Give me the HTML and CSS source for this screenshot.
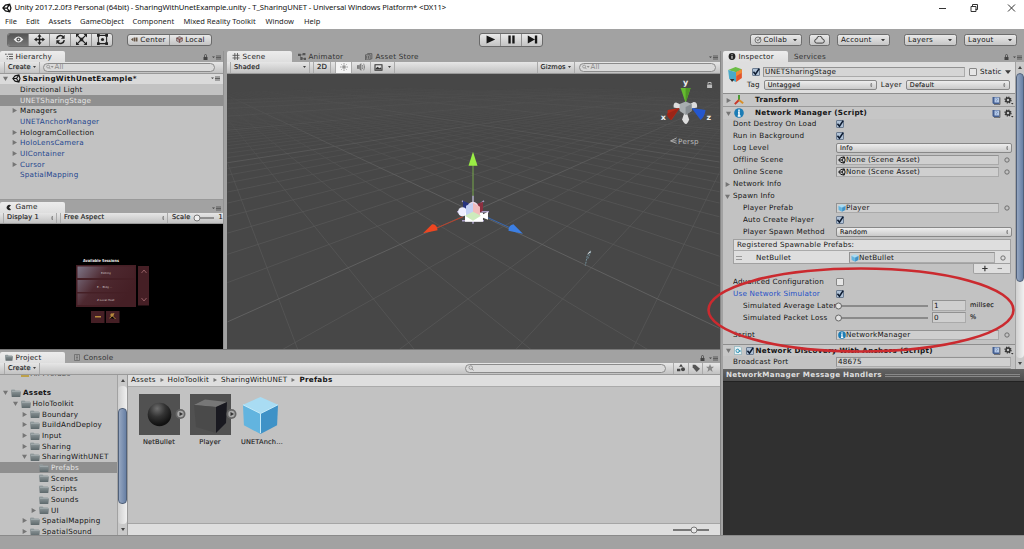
FILE: index.html
```html
<!DOCTYPE html>
<html lang="en">
<head>
<meta charset="utf-8">
<title>Unity 2017.2.0f3 Personal (64bit)</title>
<link rel="stylesheet" href="styles.css">
</head>
<body>
<svg class="defs" width="0" height="0">
  <defs>
    <linearGradient id="gFolder" x1="0" y1="0" x2="0" y2="1"><stop offset="0" stop-color="#98a1a3"/><stop offset="1" stop-color="#5d686b"/></linearGradient>
    <radialGradient id="gBall" cx=".4" cy=".25" r=".7"><stop offset="0" stop-color="#6e6e6e"/><stop offset=".5" stop-color="#333"/><stop offset="1" stop-color="#111"/></radialGradient>
    <linearGradient id="gGlow" x1="0" y1="0" x2="1" y2=".5"><stop offset="0" stop-color="#7d7587"/><stop offset=".45" stop-color="#4e2930"/><stop offset="1" stop-color="#451f25"/></linearGradient>
    <symbol id="unity" viewBox="0 0 16 16"><path d="M1.5 8 5.5 3.3 12.3 1.8 14.3 8l-2 6.2L5.5 12.7zM1.5 8H8l4.3-6.2M8 8l4.3 6.2" fill="none" stroke="currentColor" stroke-width="2"/></symbol>
    <symbol id="right" viewBox="0 0 8 8"><path d="M1 0 8 4 1 8z" fill="#757575"/></symbol>
    <symbol id="down" viewBox="0 0 8 8"><path d="M0 1h8L4 8z" fill="#757575"/></symbol>
    <symbol id="folder" viewBox="0 0 20 16"><path d="M0 3q0-2 2-2h5l2 2h8q1.5 0 1.5 2H20l-1.500 11H1.500z" fill="url(#gFolder)"/><path d="M2 5h16" stroke="#b4bcbe"/></symbol>
    <symbol id="lock" viewBox="0 0 10 12"><path d="M1 6h8v6H1z" fill="currentColor"/><path d="M3 6V3q0-2 2-2t2 2v3" fill="none" stroke="currentColor" stroke-width="1.500"/></symbol>
    <symbol id="menu" viewBox="0 0 18 10"><path d="M0 3h6L3 6z" fill="#444"/><path d="M8 2h10M8 5h10M8 8h10" stroke="#555" stroke-width="1.800"/></symbol>
    <symbol id="search" viewBox="0 0 16 12"><circle cx="5" cy="5" r="3.500" fill="none" stroke="#777" stroke-width="1.300"/><path d="m7.500 7.500 3 3.500" stroke="#777" stroke-width="1.500"/></symbol>
    <symbol id="searchDrop" viewBox="0 0 20 12"><circle cx="5" cy="5" r="3.500" fill="none" stroke="#777" stroke-width="1.300"/><path d="m7.500 7.500 3 3.500" stroke="#777" stroke-width="1.500"/><path d="M11 4h7l-3.500 4z" fill="#777"/></symbol>
    <symbol id="info" viewBox="0 0 16 16"><circle cx="8" cy="8" r="7.700" fill="#1b7cb5"/><path d="M8 2.500v3M6.500 7H8v5.500M6 12.700h4.500" stroke="#fff" stroke-width="2.400" fill="none"/></symbol>
    <symbol id="cube" viewBox="0 0 40 40"><path d="M20 1 38 9 20 18 2 9z" fill="#a9dcf3"/><path d="M2 9 20 18V39L3 30z" fill="#62b4df"/><path d="M38 9 20 18V39l17-9z" fill="#3f92c7"/><path d="M2 9 20 18 38 9M20 18v20" stroke="#c6ebfa" fill="none"/></symbol>
    <symbol id="book" viewBox="0 0 18 18"><path d="M1 2h14v14H3l-2-2z" fill="#445f91"/><path d="M5 3h9v10H5z" fill="#b6cbe8"/><path d="M7 6q3-2 4 0t-2 3v2" fill="none" stroke="#6f8ab8" stroke-width="1.300"/><path d="M16 3v14H4" fill="none" stroke="#222"/></symbol>
    <symbol id="gear" viewBox="0 0 20 18"><circle cx="8" cy="8" r="4" fill="none" stroke="#333" stroke-width="3"/><circle cx="8" cy="8" r="6" fill="none" stroke="#333" stroke-width="2.500" stroke-dasharray="2.400 2.300"/><path d="M14 14h5l-2.500 3z" fill="#333"/></symbol>
    <symbol id="target" viewBox="0 0 10 10"><circle cx="5" cy="5" r="3.600" fill="none" stroke="#666" stroke-width="1.500"/></symbol>
    <symbol id="check" viewBox="0 0 10 10"><path d="m1.800 4.800 2.500 3L9 .8" fill="none" stroke="#0d1b30" stroke-width="2"/></symbol>
    <symbol id="updown" viewBox="0 0 6 10"><path d="M3 0 6 4H0zM0 6h6l-3 4z" fill="#555"/></symbol>
    <symbol id="caret" viewBox="0 0 8 5"><path d="M0 0h8L4 5z" fill="#3d3d3d"/></symbol>
    <symbol id="hash" viewBox="0 0 12 12"><path d="M4 0v12M8.500 0v12M0 4h12M0 8.500h12" stroke="#555" stroke-width="1.500"/></symbol>
  </defs>
</svg>

<header class="titlebar">
  <svg class="logo"><use href="#unity"/></svg>
  <span class="title">Unity 2017.2.0f3 Personal (64bit) - SharingWithUnetExample.unity - T_SharingUNET - Universal Windows Platform* &lt;DX11&gt;</span>
  <svg class="winctl" viewBox="0 0 80 10"><g fill="none" stroke="#333" stroke-width="1"><path d="M2 5.500h7M34 3.500h5v5h-5zM35.500 3.500v-2h5v5h-2M71 1.500l7 7M78 1.500l-7 7"/></g></svg>
</header>
<nav class="menubar"><span class="m1">File</span><span class="m2">Edit</span><span class="m3">Assets</span><span class="m4">GameObject</span><span class="m5">Component</span><span class="m6">Mixed Reality Toolkit</span><span class="m7">Window</span><span>Help</span></nav>

<div class="maintools">
  <div class="btngroup tools">
    <span class="btn on"><svg viewBox="0 0 16 12"><path d="M1 6q7-9 14 0-7 9-14 0z" fill="#eee"/><circle cx="8" cy="6" r="3" fill="#555"/><circle cx="8" cy="6" r="1.200" fill="#eee"/></svg></span>
    <span class="btn"><svg viewBox="0 0 16 16"><path d="M8 2v12M2 8h12" stroke="#222" stroke-width="2"/><path d="M8 0l3 4H5zM8 16l3-4H5zM0 8l4-3v6zM16 8l-4-3v6z" fill="#222"/></svg></span>
    <span class="btn"><svg viewBox="0 0 16 16"><path d="M2.500 7a5.500 5.500 0 0 1 9.500-3M13.500 9A5.500 5.500 0 0 1 4 12" fill="none" stroke="#222" stroke-width="2.200"/><path d="M14 1v6H8.500zM2 15V9h5.500z" fill="#222"/></svg></span>
    <span class="btn"><svg viewBox="0 0 16 16"><path d="m2 2 12 12M14 2 2 14" stroke="#222" stroke-width="1.800"/><path d="M0 0h5L0 5zM16 0v5l-5-5zM0 16v-5l5 5zM16 16h-5l5-5zM5.500 5.500h5v5h-5z" fill="#222"/></svg></span>
    <span class="btn"><svg viewBox="0 0 16 16"><path d="M2 2h12v12H2z" fill="none" stroke="#222" stroke-width="1.500"/><path d="M0 0h4v4H0zM12 0h4v4h-4zM0 12h4v4H0zM12 12h4v4h-4z" fill="#222"/><circle cx="8" cy="8" r="2.300" fill="#222"/></svg></span>
  </div>
  <div class="btngroup pivot">
    <span class="btn"><svg viewBox="0 0 14 12"><path d="M0 6l5-4v8zM6 2h3v8H6zM10 2h3v8h-3z" fill="#654"/></svg>Center</span>
    <span class="btn"><svg viewBox="0 0 14 14"><path d="M7 1l6 3v6l-6 3-6-3V4z" fill="#a99" stroke="#544"/><path d="M1 4l6 3 6-3M7 7v6" stroke="#733" fill="none" stroke-width="1.500"/></svg>Local</span>
  </div>
  <div class="btngroup play">
    <span class="btn"><svg viewBox="0 0 14 12"><path d="M2 1l11 5-11 5z" fill="#151515"/></svg></span>
    <span class="btn"><svg viewBox="0 0 14 12"><path d="M3 1h3v10H3zM8 1h3v10H8z" fill="#151515"/></svg></span>
    <span class="btn"><svg viewBox="0 0 14 12"><path d="M1 1l9 5-9 5zM10 1h3v10h-3z" fill="#151515"/></svg></span>
  </div>
  <div class="right">
    <span class="drop collab"><svg class="i8" viewBox="0 0 12 12"><circle cx="6" cy="6" r="4.500" fill="none" stroke="#777" stroke-width="1.500"/><path d="m4 5 2 2 4-5" fill="none" stroke="#666" stroke-width="1.500"/></svg>Collab<svg class="caret"><use href="#caret"/></svg></span>
    <span class="drop cloud"><svg viewBox="0 0 16 11"><path d="M4 10a3 3 0 0 1 0-6 4 4 0 0 1 8 0 3 3 0 0 1 0 6z" fill="none" stroke="#333" stroke-width="1.300"/></svg></span>
    <span class="drop account">Account<svg class="caret"><use href="#caret"/></svg></span>
    <span class="drop layers">Layers<svg class="caret"><use href="#caret"/></svg></span>
    <span class="drop layout">Layout<svg class="caret"><use href="#caret"/></svg></span>
  </div>
</div>

<main class="work">
  <div class="leftside">
    <div class="toprow">
      <div class="leftcol">
        <section class="hierarchy">
          <div class="tabs"><span class="tab on"><svg class="ti" viewBox="0 0 14 12"><path d="M0 2h3M5 2h9M3 6h2M7 6h7M3 10h2M7 10h7" stroke="#444" stroke-width="1.500"/></svg>Hierarchy</span><span class="tabend"><svg class="lk"><use href="#lock"/></svg><svg class="mn"><use href="#menu"/></svg></span></div>
          <div class="bar"><span class="cell create">Create<svg class="caret s"><use href="#caret"/></svg></span><span class="search hs"><svg class="sd"><use href="#searchDrop"/></svg>All</span></div>
          <div class="tree">
            <div class="row scenehead"><svg class="ar"><use href="#down"/></svg><svg class="u"><use href="#unity"/></svg><b>SharingWithUnetExample*</b><svg class="mn"><use href="#menu"/></svg></div>
            <div class="row"><i></i>Directional Light</div>
            <div class="row sel"><i></i>UNETSharingStage</div>
            <div class="row"><i><svg class="ar"><use href="#right"/></svg></i>Managers</div>
            <div class="row pf"><i></i>UNETAnchorManager</div>
            <div class="row"><i><svg class="ar"><use href="#right"/></svg></i>HologramCollection</div>
            <div class="row pf"><i><svg class="ar"><use href="#right"/></svg></i>HoloLensCamera</div>
            <div class="row pf"><i><svg class="ar"><use href="#right"/></svg></i>UIContainer</div>
            <div class="row pf"><i><svg class="ar"><use href="#right"/></svg></i>Cursor</div>
            <div class="row pf"><i></i>SpatialMapping</div>
          </div>
        </section>
        <section class="game">
          <div class="tabs"><span class="tab on"><svg class="pac" viewBox="0 0 12 12"><path d="M10 1.500A5.500 5.500 0 1 0 10 10.500L6 6z" fill="#222"/></svg>Game</span><span class="tabend"><svg class="mn"><use href="#menu"/></svg></span></div>
          <div class="bar"><span class="cell disp">Display 1<svg class="ud"><use href="#updown"/></svg></span><span class="cell aspect">Free Aspect<svg class="ud"><use href="#updown"/></svg></span><span class="scale">Scale<svg viewBox="0 0 22 8"><path d="M6 4h15" stroke="#777" stroke-width="1.500"/><circle cx="4" cy="4" r="3" fill="#eee" stroke="#777"/></svg>1</span></div>
          <svg class="gameview" viewBox="0 223 223 125">
            <text x="83" y="261" class="gt" textLength="36" lengthAdjust="spacingAndGlyphs">Available Sessions</text>
            <path d="M76 264h60v42H76zM138 265h11v39.500h-11z" fill="#451f25"/>
            <path d="M77.500 265.500h57v11.500h-57zM77.500 279h57v12h-57zM77.500 292.500h57V304h-57z" fill="url(#gGlow)"/>
            <text x="101" y="272.500" class="gs">Editing</text><text x="97" y="286.500" class="gs">E…  Bldg  …</text><text x="97" y="300" class="gs">Z.Local Host</text>
            <path d="m141.500 272 2.500-3 2.500 3M141.500 297l2.500 3 2.500-3" fill="none" stroke="#a66d72" stroke-width=".8"/>
            <path d="M91 310h13.500v12H91zM106 310h13.500v12H106z" fill="#451f25"/>
            <path d="M95 315h6v1.500h-6z" fill="#b78a3c"/><circle cx="112" cy="314" r="1.700" fill="#b78a3c"/><path d="m109.500 317 3-2 3 3M114 312l-1 2" stroke="#b78a3c"/>
          </svg>
        </section>
      </div>
      <section class="scene">
        <div class="tabs"><span class="tab on"><svg class="ti"><use href="#hash"/></svg>Scene</span><span class="tab anim"><svg class="ti" viewBox="0 0 14 12"><path d="M3 3h6M3 3l3 6 5 1" fill="none" stroke="#555"/><path d="M0 1h5v4H0zM8 0h5v4H8zM4 7h4v5H4zM10 8h4v4h-4z" fill="#555"/></svg>Animator</span><span class="tab store"><svg class="ti" viewBox="0 0 14 12"><path d="M4 1h8v9h-2M1 3h8v9H1zM3 5v5M6 5v5" fill="none" stroke="#555" stroke-width="1.500"/></svg>Asset Store</span><span class="tabend"><svg class="mn"><use href="#menu"/></svg></span></div>
        <div class="bar">
          <span class="cell shaded">Shaded<svg class="caret s"><use href="#caret"/></svg></span><span class="cell two">2D</span>
          <span class="cell lit"><svg viewBox="0 0 12 12"><circle cx="6" cy="6" r="2" fill="#aaa" stroke="#777"/><path d="M6 0v2.500M6 9.500V12M0 6h2.500M9.500 6H12M2 2l1.500 1.500M10 2 8.500 3.500M2 10l1.500-1.500M10 10 8.500 8.500" stroke="#777"/></svg></span>
          <span class="cell snd"><svg viewBox="0 0 12 12"><path d="M0 4h3l3-3v10L3 8H0z" fill="#888" stroke="#666"/><path d="M8 3q2 3 0 6M10 1q3 5 0 10" fill="none" stroke="#666"/></svg></span>
          <span class="cell pic"><svg viewBox="0 0 12 10"><path d="M1 1h10v8H1z" fill="#ddd" stroke="#333" stroke-width="1.500"/><path d="M2 8V6l3-2 2 2 2-1 1 1v2z" fill="#333"/></svg><svg class="caret s"><use href="#caret"/></svg></span>
          <span class="cell giz">Gizmos<svg class="caret s"><use href="#caret"/></svg></span><span class="search ss"><svg class="sd"><use href="#searchDrop"/></svg>All</span>
        </div>
        <svg class="sceneview" viewBox="227 73 493 276">
          <defs><linearGradient id="fade" x1="0" y1="82" x2="0" y2="220" gradientUnits="userSpaceOnUse"><stop offset="0" stop-color="#fff" stop-opacity="0"/><stop offset=".2" stop-color="#fff" stop-opacity=".3"/><stop offset=".7" stop-color="#fff" stop-opacity=".85"/><stop offset="1" stop-color="#fff"/></linearGradient><mask id="far" maskUnits="userSpaceOnUse" x="227" y="73" width="493" height="276"><path d="M227 73h493v276H227z" fill="url(#fade)"/></mask></defs>
          <path id="grid" class="grid" mask="url(#far)"/>
          <path id="axes" class="grid major" mask="url(#far)"/>
          <path d="M473 210v-46" stroke="#76a84a"/><path d="M473 151l4.500 14h-9z" fill="#9aed45"/>
          <path d="m463 216-28 12" stroke="#bb4029"/><path d="m423 232.500 9-9q5 0 5.500 6z" fill="#ee4621"/>
          <path d="m486 216 24 11" stroke="#3868b2"/><path d="m523 233-9.500-9.500q-5 1-5 6.500z" fill="#3c7fe4"/>
          <path d="M473 195v28M462 200l6 5M484 200l-6 5M457 211h32M462 220h22" stroke="#aaa0c8" stroke-width="1.500"/>
          <path d="M463 200l9 4v8l-9-4z" fill="#27337e"/><path d="M475 204l8-3v9l-8 5z" fill="#8c3040"/>
          <circle cx="462.500" cy="211" r="4.500" fill="#eef"/><circle cx="473" cy="206.500" r="5.500" fill="#e9dbea"/><path d="M465 212h18v9h-18zM482 214l6-3v8l-5-2z" fill="#fff"/><path d="M473 202v10l-7 3v-10z" fill="#c3d0f4"/><path d="M473 202l7 4v9l-7-3z" fill="#f1bcbc"/><path d="M473 211l8 4-8 5-8-5z" fill="#cdebbd"/>
          <path d="m590.500 250-3 5-2 10M591 251l-3 7" stroke="#6f8d98" stroke-dasharray="2 1" fill="none"/><path d="m588 253 3-2" stroke="#ddd"/>
          <path d="M684.500 105l-8-3.500q-3 0-2.500 5l10 2zM687 105l7-4q4 0 3.500 5.500l-9 2z" fill="#ddd"/><path d="M686 108l3.500 10.500q-3 9-7 0z" fill="#ddd"/>
          <path d="M681 87h10l-5 15z" fill="#65bb2f"/><path d="M686 87h5l-5 15z" fill="#4f9626"/><path d="m680 107-12 2q-1 8 4 10z" fill="#b52a18"/><path d="m680 107-9 12q-3-2-4-6z" fill="#9b2517"/><path d="m692 107 14 2q-1 7-5 10z" fill="#2457cf"/>
          <path d="m680 103 6-2.500 6 2.500v7l-6 4-6-4z" fill="#a8adaf"/><path d="m686 106 6-3v7l-6 4z" fill="#878d91"/>
          <text x="683.500" y="84" class="ax">y</text><text x="661" y="119" class="ax">x</text><text x="707" y="119" class="ax">z</text>
          <g fill="#bbb"><path d="M707.500 83.500h5v3.500h-5z"/><path d="M708.500 83v-1.500h3V83" fill="none" stroke="#bbb"/></g>
          <path d="m677 137-6 3 6 2.500M671 140h6" fill="none" stroke="#aaa"/><text x="678.500" y="142.700" class="persp">Persp</text>
        </svg>
      </section>
    </div>
    <section class="project">
      <div class="tabs"><span class="tab on"><svg class="ti"><use href="#folder"/></svg>Project</span><span class="tab cons"><svg class="ti" viewBox="0 0 12 14"><path d="M1 1h10v12H1zM4 4h4M4 7h4M4 10h4" fill="none" stroke="#666" stroke-width="1.500"/></svg>Console</span><span class="tabend"><svg class="lk"><use href="#lock"/></svg><svg class="mn"><use href="#menu"/></svg></span></div>
      <div class="bar"><span class="cell create">Create<svg class="caret s"><use href="#caret"/></svg></span><span class="search ps"><svg class="sd"><use href="#search"/></svg></span>
        <span class="cell fl"><svg viewBox="0 0 12 12"><path d="M6 0l3 4H3zM0 7h5v4H0z" fill="#444"/><circle cx="9" cy="8" r="3" fill="#444"/></svg></span><span class="cell fl"><svg viewBox="0 0 12 12"><path d="M1 1h4l7 6-5 5-6-7z" fill="#555"/></svg></span><span class="cell fl"><svg viewBox="0 0 12 12"><path d="m6 0 1.700 4H12L8.600 7l1.300 5L6 9l-3.900 3 1.300-5L0 4h4.300z" fill="#888"/></svg></span>
      </div>
      <div class="pbody">
        <div class="ftree">
          <div class="row l1 cut"><svg class="ar"></svg><em></em>All Prefabs</div>
          <div class="row l0 top"><svg class="ar"><use href="#down"/></svg><svg class="fo"><use href="#folder"/></svg><b>Assets</b></div>
          <div class="row l1"><svg class="ar"><use href="#down"/></svg><svg class="fo"><use href="#folder"/></svg>HoloToolkit</div>
          <div class="row l2"><svg class="ar"><use href="#right"/></svg><svg class="fo"><use href="#folder"/></svg>Boundary</div>
          <div class="row l2"><svg class="ar"><use href="#right"/></svg><svg class="fo"><use href="#folder"/></svg>BuildAndDeploy</div>
          <div class="row l2"><svg class="ar"><use href="#right"/></svg><svg class="fo"><use href="#folder"/></svg>Input</div>
          <div class="row l2"><svg class="ar"><use href="#right"/></svg><svg class="fo"><use href="#folder"/></svg>Sharing</div>
          <div class="row l2"><svg class="ar"><use href="#down"/></svg><svg class="fo"><use href="#folder"/></svg>SharingWithUNET</div>
          <div class="row l3 sel"><svg class="ar"></svg><svg class="fo"><use href="#folder"/></svg>Prefabs</div>
          <div class="row l3"><svg class="ar"></svg><svg class="fo"><use href="#folder"/></svg>Scenes</div>
          <div class="row l3"><svg class="ar"></svg><svg class="fo"><use href="#folder"/></svg>Scripts</div>
          <div class="row l3"><svg class="ar"></svg><svg class="fo"><use href="#folder"/></svg>Sounds</div>
          <div class="row l3"><svg class="ar"><use href="#right"/></svg><svg class="fo"><use href="#folder"/></svg>UI</div>
          <div class="row l2"><svg class="ar"><use href="#right"/></svg><svg class="fo"><use href="#folder"/></svg>SpatialMapping</div>
          <div class="row l2"><svg class="ar"><use href="#right"/></svg><svg class="fo"><use href="#folder"/></svg>SpatialSound</div>
        </div>
        <div class="sbar psb"><span class="sbtn up"></span><span class="track"><span class="thumb"></span></span><span class="sbtn dn"></span></div>
        <div class="browser">
          <div class="crumbs"><span>Assets</span><svg><use href="#right"/></svg><span>HoloToolkit</span><svg><use href="#right"/></svg><span>SharingWithUNET</span><svg><use href="#right"/></svg><b>Prefabs</b></div>
          <div class="items">
            <figure><svg viewBox="0 0 50 42"><path d="M0 0h41v41H0z" fill="#515151"/><circle cx="20.500" cy="20.500" r="11.800" fill="url(#gBall)"/><circle cx="41.500" cy="20" r="5" fill="#666"/><circle cx="41.500" cy="20" r="3.200" fill="#aaa"/><path d="m40.500 18 3.500 2-3.500 2z" fill="#333"/></svg><figcaption>NetBullet</figcaption></figure>
            <figure><svg viewBox="0 0 50 42"><path d="M0 0h41v41H0z" fill="#515151"/><path d="M4 11 15 5.500l22 2.500-11 5z" fill="#777"/><path d="M4 11l22 2v26L6 33z" fill="#4a4a4a"/><path d="M26 13 37 8l-1 21-10 10z" fill="#191920"/><circle cx="41.500" cy="20" r="5" fill="#666"/><circle cx="41.500" cy="20" r="3.200" fill="#aaa"/><path d="m40.500 18 3.500 2-3.500 2z" fill="#333"/></svg><figcaption>Player</figcaption></figure>
            <figure><svg viewBox="0 0 50 42"><use href="#cube" x="0" y="2" width="39" height="39"/></svg><figcaption>UNETAnch…</figcaption></figure>
          </div>
          <div class="zoombar"><svg viewBox="0 0 38 8"><path d="M1 4h36" stroke="#777" stroke-width="1.800"/><circle cx="22" cy="4" r="3" fill="#e8e8e8" stroke="#777"/></svg></div>
        </div>
      </div>
    </section>
  </div>

  <section class="inspector">
    <div class="tabs"><span class="tab on"><svg class="ti" viewBox="0 0 12 12"><circle cx="6" cy="6" r="5.800" fill="#222"/><path d="M6 2v2M6 5v5" stroke="#ddd" stroke-width="2"/></svg>Inspector</span><span class="tab serv">Services</span><span class="tabend"><svg class="lk"><use href="#lock"/></svg><svg class="mn"><use href="#menu"/></svg></span></div>
    <div class="ibody">
      <div class="icontent">
        <div class="ihead">
          <svg class="big" viewBox="0 0 28 28"><path d="M2 6 15 1l11 4-10 5z" fill="#6bbd45"/><path d="M2 6l14 4v17L4 22z" fill="#49a9c8"/><path d="M16 10 26 5v15l-10 7z" fill="#e3542b"/><path d="M16 10 26 5v6l-10 6z" fill="#ef8d35"/><path d="M5 22h8l-4 5z" fill="#333"/></svg>
          <div class="hrows">
            <div class="hr"><span class="cb on"><svg><use href="#check"/></svg></span><span class="field name">UNETSharingStage</span><span class="cb st"></span><span class="static">Static</span><svg class="sc"><use href="#caret"/></svg></div>
            <div class="hr tag"><span>Tag</span><span class="popup ptag">Untagged<svg class="ud"><use href="#updown"/></svg></span><span class="lay">Layer</span><span class="popup play2">Default<svg class="ud"><use href="#updown"/></svg></span></div>
          </div>
        </div>
        <div class="comp tr"><svg class="ar"><use href="#right"/></svg><svg class="ci" viewBox="0 0 12 12"><path d="M6 6V0" stroke="#4b9a35" stroke-width="2.400"/><path d="M6 6 1 11" stroke="#c8372a" stroke-width="2.400"/><path d="m6 6 5 4" stroke="#d89029" stroke-width="2.400"/></svg><b>Transform</b><svg class="bk"><use href="#book"/></svg><svg class="ge"><use href="#gear"/></svg></div>
        <div class="comp nm"><svg class="ar"><use href="#down"/></svg><svg class="ci"><use href="#info"/></svg><b>Network Manager (Script)</b><svg class="bk"><use href="#book"/></svg><svg class="ge"><use href="#gear"/></svg></div>
        <div class="prop"><label>Dont Destroy On Load</label><span class="cb on"><svg><use href="#check"/></svg></span></div>
        <div class="prop"><label>Run in Background</label><span class="cb on"><svg><use href="#check"/></svg></span></div>
        <div class="prop"><label>Log Level</label><span class="popup">Info<svg class="ud"><use href="#updown"/></svg></span></div>
        <div class="prop"><label>Offline Scene</label><span class="field"><svg class="fi"><use href="#unity"/></svg>None (Scene Asset)</span><svg class="tg"><use href="#target"/></svg></div>
        <div class="prop"><label>Online Scene</label><span class="field"><svg class="fi"><use href="#unity"/></svg>None (Scene Asset)</span><svg class="tg"><use href="#target"/></svg></div>
        <div class="prop fold"><svg class="ar"><use href="#right"/></svg><label>Network Info</label></div>
        <div class="prop fold"><svg class="ar"><use href="#down"/></svg><label>Spawn Info</label></div>
        <div class="prop in"><label>Player Prefab</label><span class="field"><svg class="fi"><use href="#cube"/></svg>Player</span><svg class="tg"><use href="#target"/></svg></div>
        <div class="prop in"><label>Auto Create Player</label><span class="cb on"><svg><use href="#check"/></svg></span></div>
        <div class="prop in"><label>Player Spawn Method</label><span class="popup">Random<svg class="ud"><use href="#updown"/></svg></span></div>
        <div class="list">
          <div class="lh">Registered Spawnable Prefabs:</div>
          <div class="lr"><svg class="grip" viewBox="0 0 6 4"><path d="M0 .5h6M0 3.500h6" stroke="#999"/></svg><span class="ln">NetBullet</span><span class="field"><svg class="fi"><use href="#cube"/></svg>NetBullet</span><svg class="tg"><use href="#target"/></svg></div>
        </div>
        <div class="lf"><svg viewBox="0 0 38 10"><path d="M7 5h6M10 2v6" stroke="#333" stroke-width="1.300"/><path d="M24 5h5" stroke="#888" stroke-width="1.200"/></svg></div>
        <div class="prop"><label>Advanced Configuration</label><span class="cb"></span></div>
        <div class="prop act"><label>Use Network Simulator</label><span class="cb on"><svg><use href="#check"/></svg></span></div>
        <div class="prop in"><label>Simulated Average Laten</label><svg class="slider" viewBox="0 0 94 8"><path d="M4 4h89" stroke="#777" stroke-width="1.500"/><circle cx="3.500" cy="4" r="3" fill="#e2e2e2" stroke="#666"/></svg><span class="field num">1</span><span class="unit">millsec</span></div>
        <div class="prop in"><label>Simulated Packet Loss</label><svg class="slider" viewBox="0 0 94 8"><path d="M4 4h89" stroke="#777" stroke-width="1.500"/><circle cx="3.500" cy="4" r="3" fill="#e2e2e2" stroke="#666"/></svg><span class="field num">0</span><span class="unit">%</span></div>
        <div class="prop script"><label>Script</label><span class="field"><svg class="fi"><use href="#info"/></svg>NetworkManager</span><svg class="tg"><use href="#target"/></svg></div>
        <div class="comp nd"><svg class="ar"><use href="#down"/></svg><svg class="cs" viewBox="0 0 16 18"><path d="M1 1h11l3 3v13H1z" fill="#e4eff2" stroke="#6da0af"/><path d="M10 7q-5-3-6 2t6 4M9 9h4M9 11h4" fill="none" stroke="#2a91b5" stroke-width="1.800"/></svg><span class="cb on"><svg><use href="#check"/></svg></span><b>Network Discovery With Anchors (Script)</b><svg class="bk"><use href="#book"/></svg><svg class="ge"><use href="#gear"/></svg></div>
        <div class="prop bp"><label>Broadcast Port</label><span class="field wide">48675</span></div>
        <div class="prop bp"><label></label><span class="field wide"></span></div>
      </div>
      <div class="sbar isb"><span class="sbtn up"></span><span class="track"><span class="thumb"></span></span><span class="sbtn dn"></span></div>
    </div>
    <div class="preview"><div class="ph"><span>NetworkManager Message Handlers</span><i></i></div></div>
    <svg class="callout" viewBox="0 0 312 88"><ellipse cx="156" cy="44" rx="152.500" ry="41.500" fill="none" stroke="#cb2a2f" stroke-width="2.600"/></svg>
  </section>
</main>
<footer class="status"></footer>
<script src="grid.js"></script>
</body>
</html>
```
FILE: styles.css
```css
* { box-sizing: border-box; }
body { margin: 0; width: 1024px; height: 549px; overflow: hidden; display: flex; flex-direction: column; background: #a2a2a2; color: #151515; font: 7.2px/1 "DejaVu Sans", sans-serif; letter-spacing: .2px; white-space: nowrap; }
svg { flex: none; display: block; }
b { font-weight: 700; letter-spacing: .28px; }
.defs { position: absolute; }

.titlebar { height: 15px; flex: none; background: #fff; display: flex; align-items: center; padding: 1px 7px 0 2px; font: 7.7px/1 "Noto Sans", sans-serif; letter-spacing: -.08px; color: #111; }
.logo { width: 10px; height: 10px; margin-right: 2.500px; }
.winctl { width: 80px; height: 10px; margin-left: auto; }
.menubar { height: 13.500px; flex: none; background: #fff; display: flex; align-items: center; padding-left: 5px; font: 7.5px/1 "Noto Sans", sans-serif; letter-spacing: 0; color: #222; }
.m1 { width: 21px; } .m2 { width: 22.500px; } .m3 { width: 31.500px; } .m4 { width: 52.500px; } .m5 { width: 51px; } .m6 { width: 82px; } .m7 { width: 38.500px; }

.maintools { height: 22.500px; flex: none; display: flex; align-items: center; padding: 0 7px; }
.btngroup { display: flex; height: 14px; border: 1px solid #6a6a6a; border-radius: 3px; overflow: hidden; background: linear-gradient(#e9e9e9, #c3c3c3); }
.btn { flex: 1; display: flex; align-items: center; justify-content: center; gap: 2px; font-size: 7.200px; }
.btn + .btn { border-left: 1px solid #909090; }
.btn.on { background: linear-gradient(#555, #777); }
.btn svg { width: 11px; height: 11px; }
.tools { width: 106px; }
.pivot { width: 85px; height: 12px; margin-left: 14px; }
.pivot svg { width: 7px; height: 7px; }
.play { width: 64px; margin-left: 267px; }
.right { margin-left: auto; display: flex; }
.drop { height: 12px; display: flex; align-items: center; border: 1px solid #6d6d6d; border-radius: 2.500px; background: linear-gradient(#e9e9e9, #c6c6c6); padding: 0 4px 0 3px; }
.drop .caret { width: 4px; height: 2.500px; margin-left: auto; }
.i8 { width: 8px; height: 8px; margin-right: 2px; }
.collab { width: 52px; }
.cloud { width: 21px; margin-left: 7.500px; padding: 0 4px; }
.cloud svg { width: 11px; height: 8px; }
.account { width: 53px; margin-left: 7px; }
.layers { width: 53px; margin-left: 14px; }
.layout { width: 53px; margin-left: 7px; }

.work { height: 484px; flex: none; display: flex; gap: 2px; }
.leftside { width: 721px; display: flex; flex-direction: column; border-right: 1px solid #858585; }
.toprow { height: 298px; display: flex; gap: 3px; }
.leftcol { width: 224px; display: flex; flex-direction: column; border-right: 1px solid #929292; }
.tabs { height: 11px; flex: none; display: flex; color: #333; }
.tab { display: flex; align-items: center; padding-left: 5px; width: 65px; }
.tab.on { background: linear-gradient(#ececec, #dedede); border-radius: 2px 2px 0 0; color: #222; }
.ti { width: 8px; height: 7px; margin-right: 2.500px; }
.tabend { margin-left: auto; display: flex; align-items: flex-end; gap: 4px; padding: 0 2px 2px 0; color: #444; }
.lk { width: 5px; height: 6px; }
.mn { width: 9px; height: 5px; }
.bar { height: 11.500px; flex: none; display: flex; align-items: stretch; background: linear-gradient(#e6e6e6, #c2c2c2); border-bottom: 1px solid #999; font-size: 6.600px; letter-spacing: .15px; -webkit-text-stroke: .15px #222; }
.cell { display: flex; align-items: center; border-left: 1px solid #aaa; border-right: 1px solid #aaa; padding: 0 3px; }
.caret.s { width: 3px; height: 2px; margin-left: auto; }
.create { width: 36px; margin-left: 4px; }
.search { display: flex; align-items: center; align-self: center; height: 9px; border: 1px solid #8b8b8b; border-radius: 5px; background: #dadada; color: #888; -webkit-text-stroke: 0; font-size: 7px; padding-left: 2px; }
.sd { width: 8.500px; height: 6px; margin-right: 0; }
.hs { margin-left: 3px; width: 172px; }

.hierarchy { height: 149px; display: flex; flex-direction: column; }
.tree { flex: 1; background: #c2c2c2; border-bottom: 1px solid #999; }
.row { height: 10.680px; display: flex; align-items: center; }
.row .ar { width: 5px; height: 5px; }
.row i { width: 20px; padding-left: 12px; }
.scenehead { background: #dadada; padding: 0 3px; }
.scenehead .u { width: 9px; height: 9px; margin: 0 2px 0 3.500px; }
.scenehead .mn { margin-left: auto; }
.row.pf { color: #25468f; }
.row.sel { background: #8f8f8f; color: #e6e6e6; }

.game { flex: 1; display: flex; flex-direction: column; padding-top: 2px; }
.game .pac { width: 6px; height: 7px; margin: 0 3.500px 0 1px; }
.game .bar { height: 11.500px; }
.disp { width: 54px; margin-left: 3px; }
.aspect { width: 108px; margin-left: 3px; }
.ud { width: 2.500px; height: 4px; margin-left: auto; }
.scale { display: flex; align-items: center; padding-left: 4px; font-size: 6.600px; }
.scale svg { width: 22px; height: 8px; margin: 0 4px 0 2px; }
.gameview { width: 223px; flex: 1; background: #000; }
.gt { font: bold 4px "DejaVu Sans Condensed", sans-serif; fill: #eee; letter-spacing: 0; }
.gs { font: 2.800px "DejaVu Sans", sans-serif; fill: #d4c5c9; letter-spacing: 0; }

.scene { width: 493px; display: flex; flex-direction: column; }
.anim { width: 68px; padding-left: 6px; }
.store { width: 80px; }
.shaded { width: 80px; margin-left: 3px; }
.two { width: 18px; margin-left: 3px; padding: 0 3px; font-size: 7px; }
.lit { width: 17px; margin-left: 4px; background: #f4f4f4; justify-content: center; }
.lit svg, .snd svg { width: 8px; height: 8px; }
.snd { width: 18px; justify-content: center; border: 0; }
.pic { width: 25px; }
.pic svg:first-child { width: 9px; height: 7px; }
.giz { margin-left: auto; width: 51px; padding-left: 15px; border-right: 1px solid #aaa; border-left: 0; }
.giz { width: 38px; padding-left: 3px; border-left: 1px solid #aaa; }
.ss { width: 137px; margin: 0 4px 0 4.500px; }
.sceneview { flex: 1; width: 493px; background: #474747; }
.grid { fill: none; stroke: #595959; stroke-width: .7; }
.major { stroke: #636363; stroke-width: .9; }
.ax { font: bold 8px "DejaVu Sans", sans-serif; fill: #eee; }
.persp { font: 7.200px "DejaVu Sans", sans-serif; fill: #bbb; }

.project { flex: 1; display: flex; flex-direction: column; padding-top: 2px; border-top: 1px solid #777; min-height: 0; }
.cons { padding-left: 8px; }
.ps { width: 201px; margin-left: 425px; margin-right: 7px; }
.fl { width: 14.500px; padding: 0 3px; border-right: 0; }
.fl svg { width: 8px; height: 8px; }
.pbody { flex: 1; min-height: 0; display: flex; }
.ftree { width: 117px; background: #c2c2c2; overflow: hidden; }
.ftree .ar { margin-right: 3px; }
.fo { width: 10px; height: 8px; margin-right: 2px; }
.l0 { padding-left: 3px; } .l1 { padding-left: 12.500px; } .l2 { padding-left: 22px; } .l3 { padding-left: 31px; }
.row.cut { height: 7px; margin-top: -4px; margin-bottom: 10px; color: #555; }
.cut em { width: 8px; height: 6px; margin-right: 2px; border-bottom: 2px solid #bda14a; }
.sbar { display: flex; flex-direction: column; background: #c9c9c9; border-left: 1px solid #a2a2a2; }
.sbtn { height: 11px; display: grid; place-items: center; }
.sbtn::after { content: ""; border: 2px solid transparent; }
.up::after { border-bottom: 3px solid #444; border-top: 0; }
.dn::after { border-top: 3px solid #444; border-bottom: 0; }
.track { flex: 1; background: linear-gradient(90deg, #d0d0d0, #f0f0f0); border-radius: 4px; display: flex; }
.thumb { width: 100%; border: 1px solid #506079; border-radius: 4px; background: linear-gradient(90deg, #95a6c0, #6880a5); }
.psb { width: 10px; }
.psb .thumb { margin-top: 22px; height: 96px; }
.browser { flex: 1; display: flex; flex-direction: column; background: #c2c2c2; border-left: 1px solid #999; }
.crumbs { height: 12px; background: #dedede; border-bottom: 1px solid #aaa; display: flex; align-items: center; padding-left: 3px; }
.crumbs svg { width: 4px; height: 4px; margin: 0 4px; }
.items { flex: 1; display: flex; padding: 7.500px 0 0 11px; }
figure { margin: 0; width: 51px; }
figure svg { width: 50px; height: 42px; }
figcaption { font-size: 6.600px; letter-spacing: .15px; width: 40px; text-align: center; margin-top: 3px; -webkit-text-stroke: .1px #222; }
.zoombar { height: 12px; background: #dedede; border-top: 1px solid #a5a5a5; display: flex; align-items: center; justify-content: flex-end; padding-right: 10px; }
.zoombar svg { width: 38px; height: 8px; }

.inspector { width: 301px; display: flex; flex-direction: column; position: relative; }
.serv { padding-left: 6px; }
.ibody { height: 307px; flex: none; display: flex; overflow: hidden; }
.icontent { width: 292px; background: #c2c2c2; overflow: hidden; }
.isb { width: 9px; }
.isb .thumb { height: 209px; }
.ihead { height: 32px; background: #dedede; border-bottom: 1px solid #8d8d8d; display: flex; padding: 4px 0 0 4px; }
.big { width: 16px; height: 17px; }
.hrows { flex: 1; padding-left: 4px; }
.hr { height: 12px; display: flex; align-items: center; padding-left: 5px; }
.hr.tag { padding-left: 0; margin-top: 1px; }
.cb { width: 8px; height: 8px; flex: none; border: 1px solid #878787; border-radius: 1px; background: #e5e5e5; display: block; }
.cb.on { background: #afc1d6; border-color: #6b7b90; }
.cb svg { width: 8px; height: 8px; margin: -1px; }
.field { height: 10.500px; border: 1px solid #929292; border-right-color: #aaa; border-bottom-color: #aaa; background: #cfcfcf; display: flex; align-items: center; padding-left: 1px; flex: none; width: 163px; }
.field.name { width: 202px; margin-left: 3px; background: #d5d5d5; }
.st { margin-left: 4px; }
.static { margin-left: 3px; }
.sc { width: 6px; height: 4px; margin-left: 3px; }
.popup { width: 176px; height: 9.500px; border: 1px solid #888; border-radius: 2px; background: linear-gradient(#ededed, #cacaca); display: flex; align-items: center; padding: 0 3px; font-size: 6.400px; letter-spacing: .15px; -webkit-text-stroke: .1px #222; }
.ptag { width: 113px; margin-left: 4px; }
.lay { margin-left: 4px; }
.play2 { width: 104px; margin-left: 4px; }
.comp { display: flex; align-items: center; height: 13px; padding: 0 1px 0 3px; background: #c6c6c6; }
.comp .ar { width: 5px; height: 5px; }
.ci { width: 10px; height: 10px; margin: 0 11.500px 0 2.500px; }
.cs { width: 8px; height: 9px; margin: 0 4px 0 3px; }
.nd .cb { margin-right: 1.500px; }
.comp .bk { width: 9px; height: 9px; margin-left: auto; }
.ge { width: 10px; height: 9px; margin-left: 3px; }
.tr { border-bottom: 1px solid #999; }
.nm { height: 12px; margin-bottom: -1px; }
.prop { height: 12px; display: flex; align-items: center; padding-left: 10px; }
.prop label { width: 103px; flex: none; overflow: hidden; padding: 1px 0; }
.prop.in { padding-left: 20px; }
.prop.in label { width: 93px; }
.fold { padding-left: 2px; }
.fold .ar { width: 5px; height: 5px; margin-right: 3px; }
.fi { width: 8px; height: 8px; margin-right: 0; }
.tg { width: 6px; height: 6px; margin-left: 5px; }
.list { margin: 1px 4px 0 10px; border: 1px solid #a0a0a0; background: #dedede; height: 25px; }
.lh { height: 11px; border-bottom: 1px solid #aaa; display: flex; align-items: center; padding-left: 3px; }
.lr { height: 13px; display: flex; align-items: center; padding-left: 2px; }
.grip { width: 6px; height: 4px; }
.ln { width: 107px; padding-left: 14px; }
.lr .field { width: 146px; }
.lf { height: 10px; width: 38px; margin: 0 4px 1.500px auto; background: #dedede; border: 1px solid #a0a0a0; border-top: 0; border-radius: 0 0 2px 2px; }
.lf svg { width: 38px; height: 9px; }
.act { color: #2450c8; }
.prop.in .slider { width: 94px; height: 8px; margin-left: -1px; }
.num { width: 34px; margin-left: 3px; }
.unit { margin-left: 4px; font-size: 6.500px; -webkit-text-stroke: .1px #222; }
.script { margin-top: 5.500px; }
.nd { height: 12px; margin-top: 3px; border-top: 1px solid #8d8d8d; }
.bp { height: 11.500px; }
.field.wide { width: 175px; }
.preview { flex: 1; background: #303030; }
.ph { height: 13px; display: flex; align-items: center; gap: 3px; padding: 0 4px 0 3px; background: linear-gradient(#636363, #4c4c4c); border-bottom: 1px solid #222; color: #ddd; font-weight: 700; font-size: 7.200px; letter-spacing: .3px; }
.ph i { flex: 1; height: 3px; border: solid #888; border-width: 1px 0; }
.callout { position: absolute; left: -18px; top: 215px; width: 312px; height: 88px; }
.status { flex: 1; border-top: 1px solid #8a8a8a; }
```
FILE: grid.js
```js
// Perspective floor grid: every family of lines runs to its own vanishing point.
const origin = [473, 211], vanishA = [765, 80], vanishB = [196, 80], step = 0.1;
function project(i, j) {
  const a = i * step, b = j * step, w = 1 + a + b;
  return [0, 1].map(k => ((origin[k] + a * vanishA[k] + b * vanishB[k]) / w).toFixed(1)).join(' ');
}
function line(n, swap) {
  const near = -n - 0.93 / step, far = 110;
  return swap ? `M${project(near, n)}L${project(far, n)}` : `M${project(n, near)}L${project(n, far)}`;
}
let minor = '', major = '';
for (let n = -40; n <= 60; n++) {
  const d = line(n, false) + line(n, true);
  if (n % 10 === 0) major += d; else minor += d;
}
document.getElementById('grid').setAttribute('d', minor);
document.getElementById('axes').setAttribute('d', major);
```
